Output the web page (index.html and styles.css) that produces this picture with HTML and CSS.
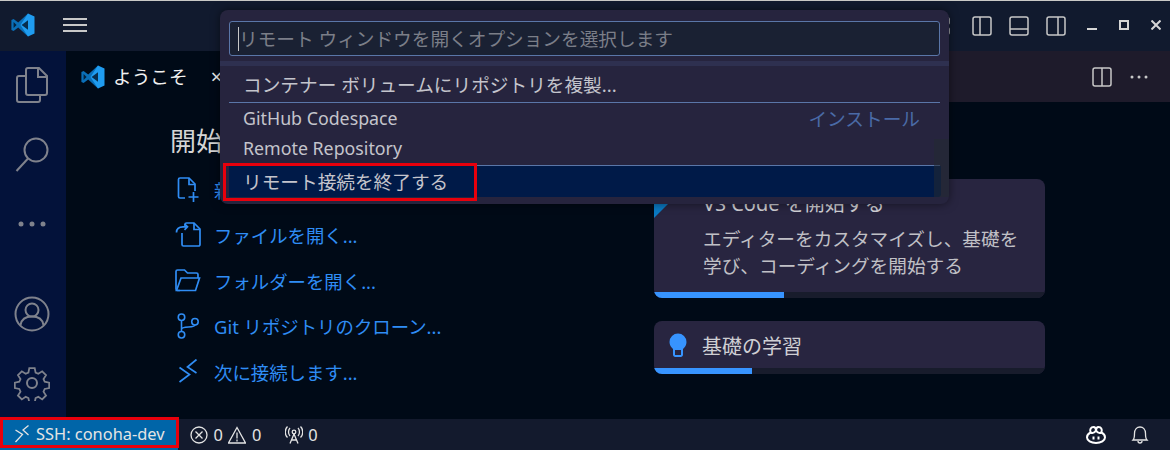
FILE: index.html
```html
<!DOCTYPE html>
<html lang="ja">
<head>
    <meta charset="UTF-8">
    <title>ようこそ - Visual Studio Code</title>
    <link rel="stylesheet" href="styles.css">
</head>
<body>

<div class="app">
    <header class="titlebar">
        <div class="title-left">
            <svg class="logo" viewBox="0 0 24 24">
                <path fill="#0a6fb8" d="M17 .5 7.2 9.6 2.6 6 .4 7.1v9.800l2.200 1.100 4.600-3.600L17 23.500l1-2V2.500z"/>
                <path fill="#1f9cf0" d="M17 .5l6.500 3.100v16.800L17 23.500 9.500 12z"/>
                <path fill="#000a17" d="M2.600 9v6l3-3zM17 7.200v9.600L10.600 12z" opacity=".75"/>
            </svg>
            <div class="hamburger"><span></span><span></span><span></span></div>
        </div>
        <div class="title-right">
            <svg class="layout-part" viewBox="0 0 8 20"><path d="M-6 1.500h7a2 2 0 0 1 2 2v3a2 2 0 0 1-2 2h-7M-6 11.500h7a2 2 0 0 1 2 2v3a2 2 0 0 1-2 2h-7"/></svg>
            <svg class="layout-icon" viewBox="0 0 20 20"><rect x="1" y="1" width="18" height="18" rx="2"/><path d="M8 1v18"/></svg>
            <svg class="layout-icon" viewBox="0 0 20 20"><rect x="1" y="1" width="18" height="18" rx="2"/><path d="M1 13h18"/></svg>
            <svg class="layout-icon" viewBox="0 0 20 20"><rect x="1" y="1" width="18" height="18" rx="2"/><path d="M12 1v18"/></svg>
            <div class="window-controls">
                <svg class="win-icon" viewBox="0 0 10 10"><path d="M0 9h10" stroke-width="2"/></svg>
                <svg class="win-icon" viewBox="0 0 10 10"><rect x="1" y="1" width="8" height="8" stroke-width="2"/></svg>
                <svg class="win-icon" viewBox="0 0 10 10"><path d="M.5.5l9 9M9.500.5l-9 9" stroke-width="2"/></svg>
            </div>
        </div>
    </header>

    <div class="main">
        <nav class="activitybar">
            <div class="activity-top">
                <svg class="activity-icon files" viewBox="0 0 32 36"><path d="M10 8V3a2 2 0 0 1 2-2h11l8 8v17a2 2 0 0 1-2 2h-5"/><path d="M22 1v9h9"/><path d="M10 9H3a2 2 0 0 0-2 2v22a2 2 0 0 0 2 2h19a2 2 0 0 0 2-2v-5H12a2 2 0 0 1-2-2z"/></svg>
                <svg class="activity-icon search" viewBox="0 0 34 36"><circle cx="21" cy="13" r="11.500"/><path d="M13 21.500 1.500 34"/></svg>
                <svg class="activity-icon dots" viewBox="0 0 28 6"><circle cx="3" cy="3" r="2.500"/><circle cx="14" cy="3" r="2.500"/><circle cx="25" cy="3" r="2.500"/></svg>
            </div>
            <div class="activity-bottom">
                <svg class="activity-icon account" viewBox="0 0 36 36"><circle cx="18" cy="18" r="16.500"/><circle cx="18" cy="14" r="6.500"/><path d="M6.500 29c1-6 5-8.500 11.500-8.500S28.500 23 29.500 29"/></svg>
                <svg class="activity-icon gear" viewBox="0 0 36 36"><path d="M15 1.500h6l1 5 3 1.300 4.300-2.800 4.300 4.300-2.800 4.300 1.300 3 5 1v6l-5 1-1.300 3 2.800 4.300-4.300 4.300-4.300-2.800-3 1.300-1 5h-6l-1-5-3-1.300-4.300 2.800-4.300-4.300 2.800-4.300-1.300-3-5-1v-6l5-1 1.300-3-2.800-4.300 4.300-4.300 4.300 2.800 3-1.300z" transform="translate(1.800 1.800) scale(.9)"/><circle cx="18" cy="18" r="5"/></svg>
            </div>
        </nav>

        <div class="editor">
            <div class="tabs">
                <div class="tab">
                    <svg class="logo" viewBox="0 0 24 24">
                        <path fill="#0a6fb8" d="M17 .5 7.2 9.600 2.600 6 .4 7.100v9.800l2.200 1.100 4.600-3.600L17 23.500l1-2V2.500z"/>
                        <path fill="#1f9cf0" d="M17 .5l6.500 3.100v16.800L17 23.500 9.500 12z"/>
                        <path fill="#000a17" d="M2.600 9v6l3-3zM17 7.200v9.600L10.600 12z" opacity=".75"/>
                    </svg>
                    <span class="tab-label">ようこそ</span>
                    <span class="tab-close">×</span>
                </div>
                <div class="tab-actions">
                    <svg class="layout-icon" viewBox="0 0 20 20"><rect x="1" y="1" width="18" height="18" rx="2"/><path d="M10 1v18"/></svg>
                    <svg class="tab-dots" viewBox="0 0 18 4"><circle cx="2" cy="2" r="1.500"/><circle cx="9" cy="2" r="1.500"/><circle cx="16" cy="2" r="1.500"/></svg>
                </div>
            </div>

            <div class="welcome">
                <section class="start">
                    <h2>開始</h2>
                    <a class="start-item">
                        <svg class="start-icon" viewBox="0 0 24 26"><path d="M9 21H4a1.500 1.500 0 0 1-1.500-1.500v-17A1.500 1.500 0 0 1 4 1h9l6 6v7"/><path d="M13 1v6.500h6M17.500 15v10M12.500 20h10"/></svg>
                        <span>新しいファイル...</span>
                    </a>
                    <a class="start-item">
                        <svg class="start-icon" viewBox="0 0 26 26"><path d="M10 4V2.500A1.500 1.500 0 0 1 11.500 1H19l6 6v15.500a1.500 1.500 0 0 1-1.500 1.500h-15A1.500 1.500 0 0 1 7 22.500V11"/><path d="M19 1v6.500h6M1.500 10.500C1.500 7 4 4.800 8 4.800h4M9.500 1.800l3 3-3 3"/></svg>
                        <span>ファイルを開く...</span>
                    </a>
                    <a class="start-item">
                        <svg class="start-icon" viewBox="0 0 26 24"><path d="M5 21.500H2.500A1.500 1.500 0 0 1 1 20V2.500A1.500 1.500 0 0 1 2.500 1h7l3 3h9A1.500 1.500 0 0 1 23 5.500V9"/><path d="M1.500 21.500 6 9h18.500l-4 12.500z"/></svg>
                        <span>フォルダーを開く...</span>
                    </a>
                    <a class="start-item">
                        <svg class="start-icon" viewBox="0 0 24 28"><circle cx="5" cy="4.500" r="3.500"/><circle cx="5" cy="23.500" r="3.500"/><circle cx="19.500" cy="9.500" r="3.500"/><path d="M5 8v12M5 17.500c0-4 14.500-1 14.500-4.500"/></svg>
                        <span>Git リポジトリのクローン...</span>
                    </a>
                    <a class="start-item">
                        <svg class="start-icon" viewBox="-4 0 26 26"><path d="M.5 8.500l10 7-10 7.500M17.500.5l-9 7.500 9 6"/></svg>
                        <span>次に接続します...</span>
                    </a>
                </section>

                <section class="walkthroughs">
                    <div class="card card-open">
                        <div class="card-corner"></div>
                        <div class="card-body">
                            <h3>VS Code を開始する</h3>
                            <p>エディターをカスタマイズし、基礎を学び、コーディングを開始する</p>
                        </div>
                        <div class="progress"><div class="progress-fill" style="width: 130px"></div></div>
                    </div>
                    <div class="card">
                        <div class="card-body card-row">
                            <svg class="bulb" viewBox="0 0 18 24"><path fill="#3794ff" stroke="none" d="M9 .5a8.500 8.500 0 0 1 8.500 8.500c0 3-1.500 5-3.500 7v1H4v-1c-2-2-3.500-4-3.500-7A8.500 8.500 0 0 1 9 .5z"/><path d="M5 17v5a1.500 1.500 0 0 0 1.500 1h5a1.500 1.500 0 0 0 1.500-1v-5" fill="none" stroke="#3794ff" stroke-width="2"/></svg>
                            <h3>基礎の学習</h3>
                        </div>
                        <div class="progress"><div class="progress-fill" style="width: 98px"></div></div>
                    </div>
                </section>
            </div>
        </div>
    </div>

    <footer class="statusbar">
        <div class="status-left">
            <div class="status-remote">
                <svg class="status-icon remote-icon" viewBox="0 0 14 18"><path d="M.5 5l7 4.500-7 7.500M13.500.5 8 5l5.500 5"/></svg>
                <span>SSH: conoha-dev</span>
            </div>
            <div class="status-problems">
                <svg class="status-icon" viewBox="0 0 18 18"><circle cx="9" cy="9" r="8"/><path d="M5.500 5.500l7 7M12.500 5.500l-7 7"/></svg>
                <span>0</span>
                <svg class="status-icon" viewBox="0 0 18 18"><path d="M9 1.500 17.500 17H.5z"/><path d="M9 6.500v6M9 13.500v2"/></svg>
                <span>0</span>
            </div>
            <div class="status-ports">
                <svg class="status-icon" viewBox="0 0 18 18"><circle cx="9" cy="6" r="1.800"/><path d="M9 8 5 17.500M9 8l4 9.500M6.500 14h5M5 2c-2 2-2 6 0 8M13 2c2 2 2 6 0 8M2.500.5c-3 3-3 8 0 11M15.500.5c3 3 3 8 0 11"/></svg>
                <span>0</span>
            </div>
        </div>
        <div class="status-right">
            <svg class="status-icon copilot" viewBox="0 0 20 18"><path d="M4.500 6.500C3.500 3 5 1 7.500 1S10 3 10 4.500C10 3 10 1 12.500 1S16.500 3 15.500 6.500c2 1 3.500 2.500 3.500 5 0 3-4 5.500-9 5.500s-9-2.500-9-5.500c0-2.500 1.500-4 3.500-5z"/><path d="M4.500 6.500c2 1 4 .5 5.500-2 1.500 2.500 3.500 3 5.500 2M7.500 10.500v3M12.500 10.500v3"/></svg>
            <svg class="status-icon" viewBox="0 0 18 18"><path d="M2 14c1.500-1.500 1.500-3 1.500-6.500C3.500 3.500 6 1 9 1s5.500 2.500 5.500 6.500c0 3.500 0 5 1.500 6.500zM7 15c0 1.500 1 2 2 2s2-.5 2-2"/></svg>
        </div>
    </footer>

    <!-- command palette -->
    <div class="quick-input">
        <div class="quick-box">
            <span class="caret"></span>
            <span class="placeholder">リモート ウィンドウを開くオプションを選択します</span>
        </div>
        <div class="quick-band"></div>
        <ul class="quick-list">
            <li class="quick-item tall">コンテナー ボリュームにリポジトリを複製...</li>
            <li class="quick-item first"><span class="latin">GitHub Codespace</span><span class="quick-tag">インストール</span></li>
            <li class="quick-item last"><span class="latin">Remote Repository</span></li>
            <li class="quick-item selected">リモート接続を終了する</li>
        </ul>
        <div class="quick-scroll"></div>
    </div>

    <div class="mark mark-quit"></div>
    <div class="mark mark-remote"></div>
</div>

</body>
</html>
```

FILE: styles.css
```css
* {
    box-sizing: border-box;
}
body {
    margin: 0;
    background-color: #000a17;
    font-family: "Noto Sans", "Noto Sans CJK JP", sans-serif;
    overflow: hidden;
}
svg {
    display: block;
    flex: none;
}
.app {
    position: relative;
    display: flex;
    flex-direction: column;
    width: 1170px;
    height: 450px;
    overflow: hidden;
}

/* title bar */
.titlebar {
    display: flex;
    justify-content: space-between;
    align-items: center;
    height: 51px;
    flex: none;
    border-top: 1px solid #c9c9c6;
    background-color: #111a2e;
}
.title-left {
    display: flex;
    align-items: center;
    padding: 0 0 2px 11px;
    gap: 28px;
}
.logo {
    width: 24px;
    height: 24px;
}
.hamburger {
    display: flex;
    flex-direction: column;
    gap: 4px;
    width: 24px;
}
.hamburger span {
    height: 2px;
    background-color: #c8c8c8;
}
.title-right {
    display: flex;
    align-items: center;
}
.layout-part {
    width: 8px;
    height: 20px;
    margin: 0 18px 0 -1px;
    fill: none;
    stroke: #c8c8c8;
    stroke-width: 1.500;
}
.layout-icon {
    width: 20px;
    height: 20px;
    margin-right: 17px;
    fill: none;
    stroke: #c8c8c8;
    stroke-width: 1.500;
}
.window-controls {
    display: flex;
    align-items: center;
    gap: 22px;
    padding: 0 9px 2px 0;
    margin-left: 4px;
}
.win-icon {
    width: 10px;
    height: 10px;
    fill: none;
    stroke: #d6d6d6;
}

/* activity bar */
.main {
    display: flex;
    flex: 1;
    min-height: 0;
}
.activitybar {
    display: flex;
    flex-direction: column;
    justify-content: space-between;
    align-items: center;
    width: 66px;
    flex: none;
    padding: 16px 3px 18px 0;
    background-color: #03123a;
}
.activity-top, .activity-bottom {
    display: flex;
    flex-direction: column;
    align-items: center;
}
.activity-icon {
    fill: none;
    stroke: #7f828c;
    stroke-width: 2;
}
.files {
    width: 32px;
    height: 36px;
}
.search {
    width: 34px;
    height: 36px;
    margin-top: 34px;
}
.dots {
    width: 28px;
    height: 6px;
    margin-top: 48px;
    fill: #7f828c;
    stroke: none;
}
.account {
    width: 36px;
    height: 36px;
}
.gear {
    width: 36px;
    height: 36px;
    margin-top: 33px;
}

/* editor */
.editor {
    display: flex;
    flex-direction: column;
    flex: 1;
    min-width: 0;
}
.tabs {
    display: flex;
    justify-content: space-between;
    height: 51px;
    flex: none;
    background-color: #1e1b2b;
}
.tab {
    display: flex;
    align-items: center;
    width: 170px;
    padding-left: 15px;
    background-color: #000a17;
    color: #f0f0f0;
    font-size: 18.670px;
}
.tab-label {
    margin: 0 0 3px 8px;
}
.tab-close {
    margin-left: 23px;
    font-size: 20px;
}
.tab-actions {
    display: flex;
    align-items: center;
    padding-right: 22px;
}
.tab-actions .layout-icon {
    margin-right: 18px;
}
.tab-dots {
    width: 18px;
    height: 4px;
    fill: #c8c8c8;
}

/* welcome page */
.welcome {
    display: flex;
    flex: 1;
    min-height: 0;
    padding-left: 104px;
}
.start {
    width: 484px;
    flex: none;
    padding-top: 20px;
}
.start h2 {
    margin: 0 0 7px;
    font-size: 26px;
    line-height: 38px;
    font-weight: 400;
    color: #d5d5d5;
}
.start-item {
    display: flex;
    align-items: center;
    height: 45.500px;
    padding-left: 5px;
    color: #2f8df5;
    font-size: 18.400px;
}
.start-item span {
    margin-left: 13px;
}
.start-icon {
    width: 26px;
    height: 26px;
    fill: none;
    stroke: #2f8df5;
    stroke-width: 1.700;
}
.walkthroughs {
    display: flex;
    flex-direction: column;
    gap: 23px;
    width: 391px;
    padding-top: 77px;
}
.card {
    position: relative;
    overflow: hidden;
    border-radius: 8px;
    background-color: #282540;
}
.card-corner {
    position: absolute;
    top: 0;
    left: 0;
    width: 39px;
    height: 39px;
    background-color: #0a7ac4;
    clip-path: polygon(0 0, 100% 0, 0 100%);
}
.card-body {
    padding: 11px 20px 14px 49px;
}
.card-open .card-body {
    height: 113px;
}
.card h3 {
    margin: 0;
    font-size: 20px;
    line-height: 28px;
    font-weight: 400;
    color: #cfcfd4;
}
.card p {
    margin: 7px 0 0;
    font-size: 18.670px;
    line-height: 27px;
    color: #c0c0c6;
}
.card-row {
    display: flex;
    align-items: center;
    height: 47px;
    padding: 2px 0 0 15px;
}
.card-row h3 {
    padding-top: 2px;
}
.bulb {
    width: 18px;
    height: 24px;
    margin: 0 15px 1px 0;
}
.progress {
    height: 6px;
    background-color: #181c2c;
}
.progress-fill {
    height: 100%;
    background-color: #3794ff;
}

/* status bar */
.statusbar {
    display: flex;
    justify-content: space-between;
    align-items: center;
    height: 31px;
    flex: none;
    background-color: #131a2d;
    color: #e4e4e4;
    font-size: 16.400px;
}
.status-left, .status-right, .status-problems, .status-ports {
    display: flex;
    align-items: center;
}
.status-remote {
    display: flex;
    align-items: center;
    width: 178px;
    height: 31px;
    padding: 0 0 2px 15px;
    gap: 7px;
    background-color: #0065a8;
}
.status-icon {
    width: 18px;
    height: 18px;
    fill: none;
    stroke: #e4e4e4;
    stroke-width: 1.300;
}
.remote-icon {
    width: 14px;
    height: 18px;
}
.copilot {
    width: 20px;
    stroke: #ffffff;
    stroke-width: 2;
}
.status-problems {
    gap: 5.500px;
    margin-left: 12px;
}
.status-ports {
    gap: 5px;
    margin-left: 24px;
}
.status-right {
    gap: 25px;
    padding-right: 21px;
}

/* command palette */
.quick-input {
    position: absolute;
    top: 10px;
    left: 220px;
    width: 729px;
    height: 194px;
    padding-top: 11px;
    border-radius: 8px;
    background-color: #26243e;
    box-shadow: 0 0 10px rgba(0, 0, 0, 0.5);
    overflow: hidden;
}
.quick-box {
    display: flex;
    align-items: center;
    height: 35px;
    margin: 0 9px;
    padding: 0 0 3px 8px;
    border: 1px solid #5a76a8;
    border-radius: 3px;
    background-color: #1a2133;
}
.caret {
    width: 1px;
    height: 24px;
    margin-top: 3px;
    background-color: #c8c8c8;
}
.placeholder {
    color: #7b7e88;
    font-size: 18.670px;
}
.quick-band {
    height: 5px;
    margin-top: 5px;
    background-color: #2e3050;
}
.quick-list {
    margin: 0;
    padding: 0;
    list-style: none;
}
.quick-item {
    display: flex;
    justify-content: space-between;
    align-items: center;
    height: 30px;
    margin: 0 9px;
    padding: 0 20px 0 14px;
    color: #c4c4cc;
    font-size: 18.670px;
}
.latin {
    font-size: 17.800px;
}
.quick-item.tall {
    height: 37px;
    padding-bottom: 1px;
    border-bottom: 1px solid #5a76a8;
}
.quick-item.first {
    height: 31px;
    padding-bottom: 2px;
}
.quick-item.last {
    height: 32px;
    padding-bottom: 4px;
    border-bottom: 1px solid #5a76a8;
}
.quick-item.selected {
    height: 31px;
    padding-bottom: 3px;
    margin-right: 8px;
    border-radius: 0 0 3px 0;
    background-color: #001a48;
}
.quick-tag {
    color: #4a6aa6;
}
.quick-scroll {
    position: absolute;
    top: 129px;
    right: 0;
    width: 15px;
    height: 58px;
    background-color: rgba(34, 42, 50, 0.55);
}

/* red highlight boxes */
.mark {
    position: absolute;
    border: 3px solid #e8000c;
}
.mark-quit {
    top: 163px;
    left: 223px;
    width: 254px;
    height: 38px;
}
.mark-remote {
    top: 417px;
    left: 0;
    width: 179px;
    height: 31px;
}
```
